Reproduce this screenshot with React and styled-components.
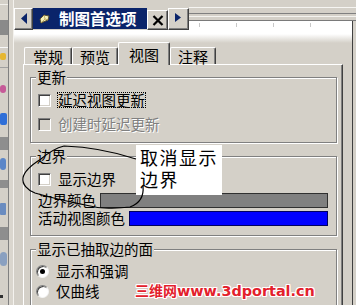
import React from "react";
import styled, { createGlobalStyle } from "styled-components";

const GlobalStyle = createGlobalStyle`
  html, body {
    margin: 0;
    padding: 0;
    background: #d4d0c8;
  }
  body {
    font-family: "Noto Sans CJK SC", "Noto Sans", sans-serif;
  }
`;

const Screen = styled.div`
  position: relative;
  width: 356px;
  height: 305px;
  overflow: hidden;
  display: flex;
  background: #d4d0c8;
  font-family: "Noto Sans CJK SC", "Noto Sans", sans-serif;
  color: #000;
`;

/* ---- left dock (partial window behind) ---- */
const Dock = styled.div`
  flex: none;
  width: 14px;
  display: flex;
`;

const DockStrip = styled.div`
  width: 8px;
  border-right: 1px solid #808080;
  display: flex;
  flex-direction: column;
`;

const DockItem = styled.div`
  flex: none;
  width: ${(p) => p.$w || 8}px;
  height: ${(p) => p.$h}px;
  margin-top: ${(p) => p.$top}px;
  background: ${(p) => p.$c};
  border-radius: ${(p) => p.$r || 0}px;
`;

const DockRail = styled.div`
  width: 4px;
  background: #dad6ce;
  border-right: 1px solid #f4f2ee;
`;

/* ---- main area ---- */
const Main = styled.div`
  flex: 1;
  display: flex;
  flex-direction: column;
  min-width: 0;
`;

const TopBand = styled.div`
  height: 7px;
  flex: none;
`;

const TitleRow = styled.div`
  height: 23px;
  flex: none;
  display: flex;
  align-items: flex-start;
`;

const Bevel = styled.div`
  box-sizing: border-box;
  flex: none;
  border-top: 1px solid #fff;
  border-left: 1px solid #fff;
  border-right: 1px solid #404040;
  border-bottom: 1px solid #404040;
  box-shadow: inset -1px -1px #808080;
  background: #d4d0c8;
`;

const ArrowButton = styled(Bevel)`
  width: ${(p) => p.$w}px;
  height: 22px;
  margin-top: 1px;
  display: flex;
  align-items: flex-start;
  padding-top: 4px;
  padding-left: ${(p) => p.$pad}px;
  svg {
    display: block;
  }
`;

const Caption = styled.div`
  flex: none;
  width: 114px;
  height: 21px;
  margin-top: 1px;
  background: #0a246a;
  display: flex;
  align-items: center;
  gap: 9px;
  padding-left: 6px;
  box-sizing: border-box;
  color: #fff;
  font-weight: 700;
  font-size: 15.5px;
  line-height: 21px;
  white-space: nowrap;
`;

const CloseButton = styled(Bevel)`
  width: 21px;
  height: 20px;
  margin-top: 3px;
  display: flex;
  align-items: center;
  justify-content: center;
`;

const Rebar = styled.div`
  flex: 1;
  height: 23px;
  background:
    linear-gradient(to right, transparent 163px, #404040 163px, #404040 164px, #d4d0c8 164px) bottom / 100% 9px no-repeat,
    linear-gradient(
      to bottom,
      #f6f5f2 0px, #f6f5f2 1px,
      #d4d0c8 1px, #d4d0c8 6px,
      #808080 6px, #808080 7px,
      #d4d0c8 7px, #d4d0c8 9px,
      #f4f3ef 9px, #f4f3ef 10px,
      #d4d0c8 10px, #d4d0c8 13px,
      #7a7a7a 13px, #7a7a7a 14px,
      #ffffff 14px
    );
  display: flex;
  align-items: flex-end;
  padding-left: 10px;
  gap: 36px;
  box-sizing: border-box;
`;

const Tick = styled.span`
  width: 1px;
  height: 4px;
  margin-bottom: 3px;
  background: #c8c8c8;
`;

const SheetRow = styled.div`
  flex: 1;
  display: flex;
  min-height: 0;
`;

const Sheet = styled.div`
  width: 339px;
  flex: none;
  box-sizing: border-box;
  border-right: 1px solid #404040;
  background: linear-gradient(to bottom, #ffffff 0px, #ffffff 4px, #d4d0c8 13px);
  padding: 12px 0 0 9px;
  display: flex;
  flex-direction: column;
`;

const Gutter = styled.div`
  flex: 1;
`;

/* ---- tabs ---- */
const TabStrip = styled.div`
  height: 22px;
  display: flex;
  align-items: flex-end;
  padding-left: 1px;
  position: relative;
  z-index: 2;
`;

const Tab = styled.div`
  box-sizing: border-box;
  width: ${(p) => p.$w}px;
  height: ${(p) => (p.$active ? 23 : 17)}px;
  margin-bottom: ${(p) => (p.$active ? -1 : 0)}px;
  padding-top: ${(p) => (p.$active ? 4 : 1)}px;
  border-top: 1px solid #fff;
  border-left: 1px solid #fff;
  border-right: 1px solid #404040;
  box-shadow: inset -1px 0 #808080;
  border-radius: 2px 2px 0 0;
  background: #d4d0c8;
  font-size: 15px;
  line-height: 15px;
  text-align: center;
  white-space: nowrap;
`;

const Panel = styled.div`
  flex: 1;
  width: 320px;
  box-sizing: border-box;
  border-top: 1px solid #fff;
  border-left: 1px solid #fff;
  border-right: 1px solid #404040;
  box-shadow: inset -1px 0 #808080;
  padding: 3px 5px 0 6px;
  display: flex;
  flex-direction: column;
  gap: 4px;
`;

/* ---- group boxes ---- */
const GroupBox = styled.fieldset`
  margin: 0;
  min-width: 0;
  border: 1px solid #808080;
  box-shadow: inset 1px 1px #fff, 1px 1px #fff;
  padding: ${(p) => p.$pt}px 8px ${(p) => p.$pb}px 7px;
  display: flex;
  flex-direction: column;
  gap: ${(p) => p.$gap}px;
`;

const Legend = styled.legend`
  margin-left: -2px;
  padding: 0 1px;
  background: #d4d0c8;
  font-size: 14.5px;
  line-height: 18px;
  white-space: nowrap;
`;

const CheckRow = styled.div`
  display: flex;
  align-items: center;
  height: 16px;
`;

const CheckBox = styled.span`
  flex: none;
  box-sizing: border-box;
  width: 13px;
  height: 13px;
  border-style: solid;
  border-width: 1px;
  border-color: #808080 #fff #fff #808080;
  box-shadow: inset 1px 1px #404040, inset -1px -1px #d4d0c8;
  background: ${(p) => (p.$disabled ? "#d4d0c8" : "#fff")};
`;

const CheckLabel = styled.span`
  margin-left: 6px;
  border: 1px dotted ${(p) => (p.$focus ? "#000" : "transparent")};
  font-size: 14.5px;
  line-height: 14px;
  white-space: nowrap;
  color: ${(p) => (p.$disabled ? "#808080" : "#000")};
  text-shadow: ${(p) => (p.$disabled ? "1px 1px #fff" : "none")};
`;

const ColorRow = styled.div`
  display: flex;
  align-items: center;
  height: 16px;
  gap: 4px;
  ${CheckRow} + & {
    margin-top: 3px;
  }
`;

const ColorLabel = styled.span`
  font-size: 14.5px;
  line-height: 16px;
  white-space: nowrap;
`;

const Swatch = styled.span`
  flex: 1;
  height: 15px;
  box-sizing: border-box;
  border: 1px solid ${(p) => p.$edge};
  background: ${(p) => p.$color};
`;

const RadioRow = styled.div`
  display: flex;
  align-items: center;
  height: 16px;
`;

const Radio = styled.span`
  flex: none;
  position: relative;
  box-sizing: border-box;
  width: 13px;
  height: 13px;
  margin-left: -2px;
  border-radius: 50%;
  border-style: solid;
  border-width: 1px;
  border-color: #808080 #f4f4f4 #f4f4f4 #808080;
  box-shadow: inset 1px 1px #404040;
  background: #fff;
  &::after {
    content: "";
    display: ${(p) => (p.$on ? "block" : "none")};
    position: absolute;
    left: 3px;
    top: 3px;
    width: 5px;
    height: 5px;
    border-radius: 50%;
    background: #000;
  }
`;

const RadioLabel = styled.span`
  margin-left: 7px;
  font-size: 14.5px;
  line-height: 16px;
  white-space: nowrap;
`;

/* ---- overlays ---- */
const Note = styled.div`
  position: absolute;
  left: 136px;
  top: 145px;
  width: 86px;
  height: 50px;
  box-sizing: border-box;
  background: #fff;
  padding: 1px 0 0 4px;
  font-size: 18px;
  line-height: 22px;
  letter-spacing: 1.5px;
  white-space: nowrap;
  z-index: 5;
`;

const Scribble = styled.svg`
  position: absolute;
  left: 0;
  top: 0;
  z-index: 6;
  pointer-events: none;
`;

const Watermark = styled.div`
  position: absolute;
  left: 135px;
  top: 282px;
  z-index: 7;
  display: flex;
  align-items: baseline;
  color: #e3202c;
  font-weight: 700;
  white-space: nowrap;
  text-shadow: 1px 0 #fff, -1px 0 #fff, 0 1px #fff, 0 -1px #fff, 1px 1px #fff, -1px -1px #fff,
    1px -1px #fff, -1px 1px #fff, 0 0 3px #f7a0a0;
`;

const MarkCn = styled.span`
  font-family: "Noto Sans CJK SC", sans-serif;
  font-size: 14px;
  line-height: 16px;
`;

const MarkUrl = styled.span`
  font-family: "DejaVu Sans", sans-serif;
  font-size: 14.4px;
  line-height: 16px;
`;

const dockItems = [
  { top: 4, h: 1, c: "#f2f0ec" },
  { top: 15, h: 15, c: "#8a8a8a" },
  { top: 12, h: 1, c: "#f8f8f8" },
  { top: 5, h: 7, c: "#e6b732", w: 6, r: 2 },
  { top: 7, h: 1, c: "#a0a0a0" },
  { top: 17, h: 8, c: "#c65a98", w: 6, r: 3 },
  { top: 20, h: 12, c: "#2f6fd8", w: 7, r: 2 },
  { top: 12, h: 13, c: "#8e8e8e" },
  { top: 8, h: 12, c: "#5b86c8", w: 6, r: 4 },
  { top: 10, h: 8, c: "#8e8e8e" },
  { top: 15, h: 12, c: "#6a8cc0", w: 6, r: 1 },
  { top: 12, h: 13, c: "#8e8e8e" },
  { top: 12, h: 14, c: "#8aa0c0", w: 7, r: 7 },
  { top: 29, h: 3, c: "#303030", w: 3 },
];

const tabs = [
  { label: "常规", w: 48 },
  { label: "预览", w: 46 },
  { label: "视图", w: 52, active: true },
  { label: "注释", w: 46 },
];

export default function App() {
  return (
    <>
      <GlobalStyle />
      <Screen>
        <Dock>
          <DockStrip>
            {dockItems.map((d, i) => (
              <DockItem key={i} $top={d.top} $h={d.h} $c={d.c} $w={d.w} $r={d.r} />
            ))}
          </DockStrip>
          <DockRail />
        </Dock>

        <Main>
          <TopBand />
          <TitleRow>
            <ArrowButton $w={19} $pad={6}>
              <svg width="6" height="11" viewBox="0 0 6 11">
                <polygon points="6,0 0,5.5 6,11" fill="#0a246a" />
              </svg>
            </ArrowButton>
            <Caption>
              <svg width="11" height="10" viewBox="0 0 11 10">
                <path d="M2 9 L1 5 L5 1 L10 2 L9 6 Z" fill="#f3efb8" stroke="#5a5030" strokeWidth="1" />
                <path d="M5 1 L6 5 L9 6 M6 5 L2 9" stroke="#b8a050" strokeWidth="0.8" fill="none" />
              </svg>
              <span>制图首选项</span>
            </Caption>
            <CloseButton>
              <svg width="12" height="11" viewBox="0 0 12 11">
                <path d="M1.5 1 L10.5 10 M10.5 1 L1.5 10" stroke="#000" strokeWidth="2.2" />
              </svg>
            </CloseButton>
            <ArrowButton $w={21} $pad={6}>
              <svg width="6" height="9" viewBox="0 0 6 9">
                <polygon points="0,0 6,4.5 0,9" fill="#0a246a" />
              </svg>
            </ArrowButton>
            <Rebar>
              <Tick />
              <Tick />
              <Tick />
              <Tick />
            </Rebar>
          </TitleRow>

          <SheetRow>
            <Sheet>
              <TabStrip>
                {tabs.map((t) => (
                  <Tab key={t.label} $w={t.w} $active={t.active}>
                    {t.label}
                  </Tab>
                ))}
              </TabStrip>
              <Panel>
                <GroupBox $pt={6} $pb={10} $gap={8}>
                  <Legend>更新</Legend>
                  <CheckRow>
                    <CheckBox />
                    <CheckLabel $focus>延迟视图更新</CheckLabel>
                  </CheckRow>
                  <CheckRow>
                    <CheckBox $disabled />
                    <CheckLabel $disabled>创建时延迟更新</CheckLabel>
                  </CheckRow>
                </GroupBox>

                <GroupBox $pt={6} $pb={9} $gap={2}>
                  <Legend>边界</Legend>
                  <CheckRow>
                    <CheckBox />
                    <CheckLabel>显示边界</CheckLabel>
                  </CheckRow>
                  <ColorRow>
                    <ColorLabel>边界颜色</ColorLabel>
                    <Swatch $color="#808080" $edge="#303030" />
                  </ColorRow>
                  <ColorRow>
                    <ColorLabel>活动视图颜色</ColorLabel>
                    <Swatch $color="#0000ff" $edge="#000060" />
                  </ColorRow>
                </GroupBox>

                <GroupBox $pt={5} $pb={10} $gap={4}>
                  <Legend>显示已抽取边的面</Legend>
                  <RadioRow>
                    <Radio $on />
                    <RadioLabel>显示和强调</RadioLabel>
                  </RadioRow>
                  <RadioRow>
                    <Radio />
                    <RadioLabel>仅曲线</RadioLabel>
                  </RadioRow>
                </GroupBox>
              </Panel>
            </Sheet>
            <Gutter />
          </SheetRow>
        </Main>

        <Note>
          取消显示
          <br />
          边界
        </Note>

        <Scribble width="356" height="305" viewBox="0 0 356 305">
          <path
            d="M64 146 C90 147 115 152 136 159
               M143 186 C144 196 141 203 130 207 C115 209 100 208 95 207
               C70 202 45 196 35 193 C27 190 22 184 23 178
               C24 171 33 164 41 159 C48 153 56 148 64 146"
            fill="none"
            stroke="#000"
            strokeWidth="1.2"
          />
        </Scribble>

        <Watermark>
          <MarkCn>三维网</MarkCn>
          <MarkUrl>www.3dportal.cn</MarkUrl>
        </Watermark>
      </Screen>
    </>
  );
}
